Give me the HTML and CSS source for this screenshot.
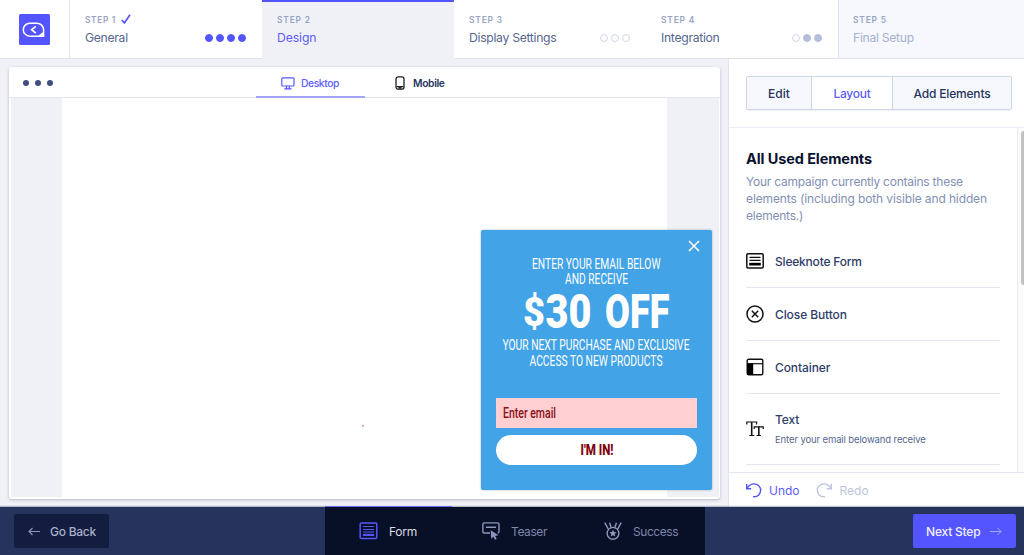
FILE: index.html
```html
<!DOCTYPE html>
<html lang="en">
<head>
<meta charset="utf-8">
<title>Campaign editor</title>
<link rel="stylesheet" href="styles.css">
</head>
<body>
<div class="app">
  <header class="header">
    <div class="logo">
      <svg width="31" height="31" viewBox="0 0 31 31"><rect width="31" height="31" rx="1.5" fill="#5555ff"/><path d="M10.8 9.2h7.2a6.6 6.6 0 0 1 6.6 6.6v6.4H10.800a6.500 6.500 0 0 1 0-13z" fill="none" stroke="#fff" stroke-width="1.500"/><path d="M19 22h5.600v-4.500z" fill="#fff"/><path d="M16.800 12.300l-4.100 3.400 4.100 3.400" fill="none" stroke="#fff" stroke-width="1.700"/></svg>
    </div>
    <div class="step">
      <div class="step-no">STEP 1<svg class="check" width="10" height="10" viewBox="0 0 10 10"><path d="M.8 6l2.600 2.900L9 .7" fill="none" stroke="#5555ff" stroke-width="1.700"/></svg></div>
      <div class="step-row"><span class="step-name">General</span><span class="dots"><i class="dot on"></i><i class="dot on"></i><i class="dot on"></i><i class="dot on"></i></span></div>
    </div>
    <div class="step active">
      <div class="step-no">STEP 2</div>
      <div class="step-row"><span class="step-name">Design</span></div>
    </div>
    <div class="step no-line">
      <div class="step-no">STEP 3</div>
      <div class="step-row"><span class="step-name">Display Settings</span><span class="dots"><i class="dot"></i><i class="dot"></i><i class="dot"></i></span></div>
    </div>
    <div class="step no-line">
      <div class="step-no">STEP 4</div>
      <div class="step-row"><span class="step-name">Integration</span><span class="dots"><i class="dot"></i><i class="dot grey"></i><i class="dot grey"></i></span></div>
    </div>
    <div class="step disabled">
      <div class="step-no">STEP 5</div>
      <div class="step-row"><span class="step-name">Final Setup</span></div>
    </div>
  </header>

  <main class="main">
    <section class="stage">
      <div class="window">
        <div class="window-bar">
          <div class="window-dots"><i></i><i></i><i></i></div>
          <div class="device active">
            <svg width="14" height="13" viewBox="0 0 14 13" fill="none" stroke="#5555ff" stroke-width="1.200"><rect x=".8" y=".8" width="12.200" height="8.200" rx="1"/><path d="M5.500 9v2.600M8.300 9v2.600M3.300 11.800h7.300"/></svg>
            <span>Desktop</span>
          </div>
          <div class="device mobile">
            <svg width="10" height="14" viewBox="0 0 10 14" fill="none" stroke="#222" stroke-width="1.300"><rect x="1" y=".8" width="8" height="12.400" rx="2.200"/><path d="M1.500 10.700h7M3.500 12h3"/></svg>
            <span>Mobile</span>
          </div>
        </div>
        <div class="canvas">
          <div class="page"><i class="speck"></i></div>
          <div class="popup">
            <svg class="close" width="12" height="12" viewBox="0 0 12 12"><path d="M1 1l10 10M11 1L1 11" stroke="#fff" stroke-width="1.600"/></svg>
            <svg class="copy" width="231" height="150" viewBox="0 0 231 150">
              <g class="thin">
                <text x="51" y="38.500" textLength="128.500" lengthAdjust="spacingAndGlyphs">ENTER YOUR EMAIL BELOW</text>
                <text x="84" y="53.500" textLength="63" lengthAdjust="spacingAndGlyphs">AND RECEIVE</text>
                <text x="21.500" y="120.300" textLength="187" lengthAdjust="spacingAndGlyphs">YOUR NEXT PURCHASE AND EXCLUSIVE</text>
                <text x="48.500" y="136.300" textLength="133" lengthAdjust="spacingAndGlyphs">ACCESS TO NEW PRODUCTS</text>
              </g>
              <text class="offer dollar" x="42" y="95.500" textLength="22" lengthAdjust="spacingAndGlyphs">$</text>
              <text class="offer" x="64.500" y="98" textLength="46" lengthAdjust="spacingAndGlyphs">30</text>
              <text class="offer" x="124" y="98" textLength="64.500" lengthAdjust="spacingAndGlyphs">OFF</text>
            </svg>
            <div class="field"><svg width="60" height="30"><text class="field-text" x="0" y="20" textLength="53" lengthAdjust="spacingAndGlyphs">Enter email</text></svg></div>
            <div class="cta"><svg width="34" height="30"><text class="cta-text" x="0.500" y="20" textLength="33" lengthAdjust="spacingAndGlyphs">I'M IN!</text></svg></div>
          </div>
        </div>
      </div>
    </section>

    <aside class="side">
      <div class="tabs-wrap">
        <div class="tabs"><div class="tab edit">Edit</div><div class="tab layout">Layout</div><div class="tab add">Add Elements</div></div>
      </div>
      <div class="scroll">
        <div class="list">
          <h2 class="title">All Used Elements</h2>
          <p class="intro">Your campaign currently contains these<br><span class="intro-2">elements (including both visible and hidden</span><br>elements.)</p>
          <div class="item">
            <svg width="18" height="18" viewBox="0 0 18 18"><rect x=".8" y="1.700" width="16.400" height="14.300" rx="1.200" fill="none" stroke="#111" stroke-width="1.500"/><path d="M3.500 5.300h11M3.500 8.300h11" stroke="#111" stroke-width="1.200"/><path d="M3.200 10.800h11.600v2.700H3.200z" fill="#000"/></svg>
            <span class="item-name form-name">Sleeknote Form</span>
          </div>
          <div class="item">
            <svg width="18" height="18" viewBox="0 0 18 18" fill="none" stroke="#111" stroke-width="1.500"><circle cx="9" cy="9" r="8"/><path d="M5.800 5.800l6.400 6.400M12.200 5.800l-6.400 6.400"/></svg>
            <span class="item-name">Close Button</span>
          </div>
          <div class="item">
            <svg width="18" height="18" viewBox="0 0 18 18"><rect x="1.200" y="1.200" width="15.600" height="15.600" rx="1.500" fill="none" stroke="#111" stroke-width="1.400"/><path d="M1 5.700h16" stroke="#111" stroke-width="1.200"/><path d="M1 5.500h6.200V17H1z" fill="#000"/></svg>
            <span class="item-name">Container</span>
          </div>
          <div class="item last">
            <svg width="18" height="18" viewBox="0 0 18 18" fill="none" stroke="#111"><path d="M.8 4.500V2h9.800v2.500M3.300 15.500h4.900" stroke-width="1.200"/><path d="M5.700 2v13.500" stroke-width="1.600"/><path d="M8.200 9V6.800h9V9M10.500 15.500h4.500" stroke-width="1.200"/><path d="M12.800 6.800v8.700" stroke-width="1.600"/></svg>
            <div><div class="item-name">Text</div><div class="item-sub">Enter your email belowand receive</div></div>
          </div>
        </div>
        <div class="track"><div class="thumb"></div></div>
      </div>
      <div class="history">
        <svg width="15" height="15" viewBox="0 0 15 15" fill="none" stroke="#5555ff" stroke-width="1.400"><path d="M.7 1v4.700h4.500"/><path d="M1 5.200C3.200 2 5.700.9 8.200.9a6.400 6.400 0 0 1 0 12.900H7"/></svg>
        <span class="undo">Undo</span>
        <svg width="15" height="15" viewBox="0 0 15 15" fill="none" stroke="#bcc5dc" stroke-width="1.400"><path d="M14.300 1v4.700H9.800"/><path d="M14 5.200C11.800 2 9.300.9 6.800.9a6.400 6.400 0 0 0 0 12.900H8"/></svg>
        <span class="redo">Redo</span>
      </div>
    </aside>
  </main>

  <footer class="footer">
    <div class="back"><svg width="12" height="9" viewBox="0 0 12 9" fill="none" stroke="#8c96b4" stroke-width="1.100"><path d="M12 4.500H1M4.500 1L1 4.500 4.500 8"/></svg><span>Go Back</span></div>
    <div class="modes">
      <div class="mode form">
        <svg width="19" height="18" viewBox="0 0 19 18"><rect x="1.200" y="1" width="16.600" height="15.600" rx="1.300" fill="none" stroke="#5555ff" stroke-width="1.500"/><path d="M4 4.500h11M4 7.500h11M4 10h11" stroke="#5555ff" stroke-width="1"/><path d="M4 11.800h11v2.200H4z" fill="#5555ff"/></svg>
        <span>Form</span>
      </div>
      <div class="mode teaser">
        <svg width="18" height="18" viewBox="0 0 18 18"><path d="M8 11H2.200A1.300 1.300 0 0 1 .9 9.700V2.200A1.300 1.300 0 0 1 2.200.9h13.500A1.300 1.300 0 0 1 17 2.200v7.500a1.300 1.300 0 0 1-1.300 1.300M4 5.300h10" fill="none" stroke="#8c96b8" stroke-width="1.400"/><path d="M8.700 8.200l7.800 5-3.300.7 1.500 3-1.700.9-1.600-3.100-2.200 2z" fill="#8c96b8"/></svg>
        <span>Teaser</span>
      </div>
      <div class="mode success">
        <svg width="18" height="18" viewBox="0 0 18 18" fill="none" stroke="#8c96b8" stroke-width="1.400"><circle cx="9" cy="11.300" r="5.900"/><path d="M.8.700l3.500 6.500M5.500.700l1.700 4.800M12.500.700l-1.700 4.800M17.200.700l-3.500 6.500"/><path d="M9 7.700l1.100 2.400 2.600.2-2 1.700.7 2.600L9 13.200l-2.400 1.400.7-2.600-2-1.700 2.600-.2z" fill="#8c96b8" stroke="none"/></svg>
        <span>Success</span>
      </div>
    </div>
    <div class="next"><span>Next Step</span><svg width="12" height="9" viewBox="0 0 12 9" fill="none" stroke="#a5a5ff" stroke-width="1"><path d="M0 4.500h11M7.500 1L11 4.500 7.500 8"/></svg></div>
  </footer>
</div>
</body>
</html>
```
FILE: styles.css
```css
* { box-sizing: border-box; }
body { margin: 0; font-family: Inter, "Liberation Sans", sans-serif; background: #f0f1f7; color: #26345d; }
svg { display: block; flex: none; overflow: visible; }
.app { width: 1024px; height: 555px; display: flex; flex-direction: column; overflow: hidden; }

/* Header */
.header { height: 59px; flex: none; display: flex; }
.logo { width: 69px; background: #fff; border-bottom: 1px solid #dfe2ec; padding: 14px 0 0 19px; }
.step { width: 192px; background: #fff; border-left: 1px solid #dfe4f2; border-bottom: 1px solid #dfe2ec; padding: 14px 16px 0 15px; }
.logo + .step { width: 193px; }
.step.no-line { border-left-color: #fff; padding-right: 16px; padding-left: 14px; }
.step.active { background: #f0f1f7; border-color: #f0f1f7; border-top: 2px solid #5555ff; border-left: 0; padding-top: 12px; }
.step.disabled { flex: 1; width: auto; background: #f7f8fd; padding-left: 14px; }
.step-no { height: 12px; display: flex; align-items: center; gap: 5px; font-size: 8.3px; line-height: 12px; font-weight: 600; letter-spacing: 0.9px; color: #97a3c4; white-space: pre; }
.logo + .step .step-no { letter-spacing: 0.7px; }
.check { margin-top: -2px; }
.step-row { display: flex; align-items: center; justify-content: space-between; margin-top: 3px; height: 17px; }
.step-name { font-size: 12.2px; letter-spacing: -0.3px; color: #566791; white-space: nowrap; }
.active .step-name { color: #5d5dff; letter-spacing: -0.1px; }
.disabled .step-name { color: #a5b0cf; }
.dots { display: flex; gap: 3px; }
.dot { width: 8px; height: 8px; border: 1px solid #d0d7ea; border-radius: 50%; }
.dot.on { background: #5555ff; border-color: #5555ff; }
.dot.grey { background: #b4bedb; border-color: #b4bedb; }

/* Preview */
.main { flex: 1; min-height: 0; display: flex; }
.stage { width: 728px; padding: 8px 8px 8px 9px; }
.window { height: 432px; width: 711px; background: #fff; border-radius: 3px; box-shadow: 0 1px 3px rgba(60, 72, 110, 0.35); display: flex; flex-direction: column; padding: 0 1px 2px 2px; }
.window-bar { height: 31px; flex: none; margin: 0 -1px 0 -2px; border-bottom: 1px solid #e4e7f1; display: flex; font-size: 10.3px; font-weight: 500; }
.window-dots { display: flex; gap: 6px; padding: 13px 0 0 14px; width: 247px; }
.window-dots i { width: 6px; height: 6px; border-radius: 50%; background: #41507c; }
.device { height: 31px; display: flex; align-items: center; }
.device.active { width: 109px; padding: 1px 0 0 25px; gap: 6px; color: #5d5dff; box-shadow: inset 0 -2px #a0a3f7; letter-spacing: -0.4px; position: relative; z-index: 1; }
.device.mobile { padding-left: 30px; gap: 8px; font-weight: 600; letter-spacing: -0.35px; }
.canvas { flex: 1; background: #f0f1f7; padding: 0 52px 0 51px; position: relative; }
.page { height: 100%; background: #fff; }
.speck { position: absolute; left: 351px; top: 327px; width: 2px; height: 2px; border-radius: 50%; background: #e08a9a; }
.popup { position: absolute; left: 470px; top: 132px; width: 231px; height: 260px; border-radius: 2px; background: #42a3e6; box-shadow: 0 0 2px rgba(30, 90, 140, 0.5); font-family: Roboto, sans-serif; }
.close { position: absolute; right: 12px; top: 10px; }
.thin { font-size: 15.5px; font-weight: 400; fill: #fff; }
.offer { font-size: 48.5px; font-weight: 900; fill: #fff; }
.offer.dollar { font-size: 41px; }
.field { height: 30px; margin: 18px 15px 7px; background: #ffcfd1; padding-left: 7px; }
.field-text { font-size: 14.5px; font-weight: 500; fill: #8b1018; }
.cta { height: 30px; margin: 0 15px; background: #fff; border-radius: 15px; display: flex; justify-content: center; }
.cta-text { font-size: 15px; font-weight: 800; fill: #800008; }

/* Sidebar */
.side { flex: 1; background: #fff; border-left: 1px solid #e3e6f0; display: flex; flex-direction: column; }
.tabs-wrap { height: 69px; flex: none; border-bottom: 1px solid #e9ecf5; padding: 17px 0 0 17px; }
.tabs { width: 266px; height: 34px; display: flex; border: 1px solid #cdd6ea; border-radius: 2px; font-size: 12px; font-weight: 500; box-shadow: 0 1px 1px rgba(60, 72, 110, 0.08); }
.tab { display: flex; align-items: center; justify-content: center; background: #f7f8fd; white-space: nowrap; }
.edit { width: 64px; }
.layout { width: 82px; background: #fff; color: #5d5dff; border: solid #cdd6ea; border-width: 0 1px; letter-spacing: -0.25px; }
.add { flex: 1; letter-spacing: -0.18px; }
.scroll { flex: 1; min-height: 0; display: flex; overflow: hidden; }
.list { width: 288px; padding: 22px 17px 0 17px; }
.title { margin: 0; font-size: 14.5px; line-height: 18px; font-weight: 700; letter-spacing: -0.1px; color: #0a1230; }
.intro { margin: 5px 0 0; font-size: 12px; line-height: 17px; letter-spacing: -0.23px; color: #8290b5; white-space: nowrap; }
.intro-2 { letter-spacing: -0.12px; }
.item { height: 53px; display: flex; align-items: center; gap: 11px; border-bottom: 1px solid #e4e8f3; }
.intro + .item { height: 64px; padding-top: 11px; }
.item-name { font-size: 12px; line-height: 15px; font-weight: 500; letter-spacing: -0.1px; color: #2f3d69; }
.form-name { letter-spacing: -0.2px; }
.item.last { height: 71px; }
.item-sub { margin-top: 6px; font-size: 9.5px; line-height: 14px; letter-spacing: -0.12px; color: #566791; white-space: nowrap; }
.track { flex: 1; background: #fafafa; border-left: 1px solid #ececec; padding: 3px 0 0 3px; }
.thumb { height: 154px; background: #c1c1c1; border-radius: 3px 0 0 3px; }
.history { height: 35px; flex: none; border-top: 1px solid #e4e8f3; display: flex; align-items: center; padding: 1px 0 0 17px; font-size: 12px; }
.undo { margin: 0 17px 0 8px; color: #5d5dff; }
.redo { margin-left: 8px; color: #bcc5dc; }

/* Footer */
.footer { height: 48px; flex: none; background: #26345d; display: flex; align-items: flex-start; box-shadow: 0 -1px 1px rgba(38, 52, 93, 0.3); position: relative; }
.back, .next { display: flex; align-items: center; height: 34px; margin-top: 7px; border-radius: 2px; font-size: 12px; font-weight: 500; white-space: nowrap; }
.back { width: 95px; margin-left: 14px; padding-left: 14px; gap: 10px; background: #121d40; color: #a9b1c9; letter-spacing: -0.25px; }
.modes { width: 380px; height: 48px; margin-left: 216px; background: #081028; display: flex; font-size: 12px; color: #7d87a8; }
.mode { display: flex; align-items: center; gap: 11px; }
.form { width: 127px; padding-left: 34px; box-shadow: 0 -1px #6c6cf0; color: #d9dbe3; letter-spacing: -0.25px; }
.teaser { width: 122px; padding-left: 30px; letter-spacing: -0.42px; }
.success { padding-left: 30px; letter-spacing: -0.45px; }
.next { width: 103px; margin-left: 208px; padding-left: 13px; gap: 10px; background: #5555ff; color: #f0f0ff; letter-spacing: -0.2px; }
```
